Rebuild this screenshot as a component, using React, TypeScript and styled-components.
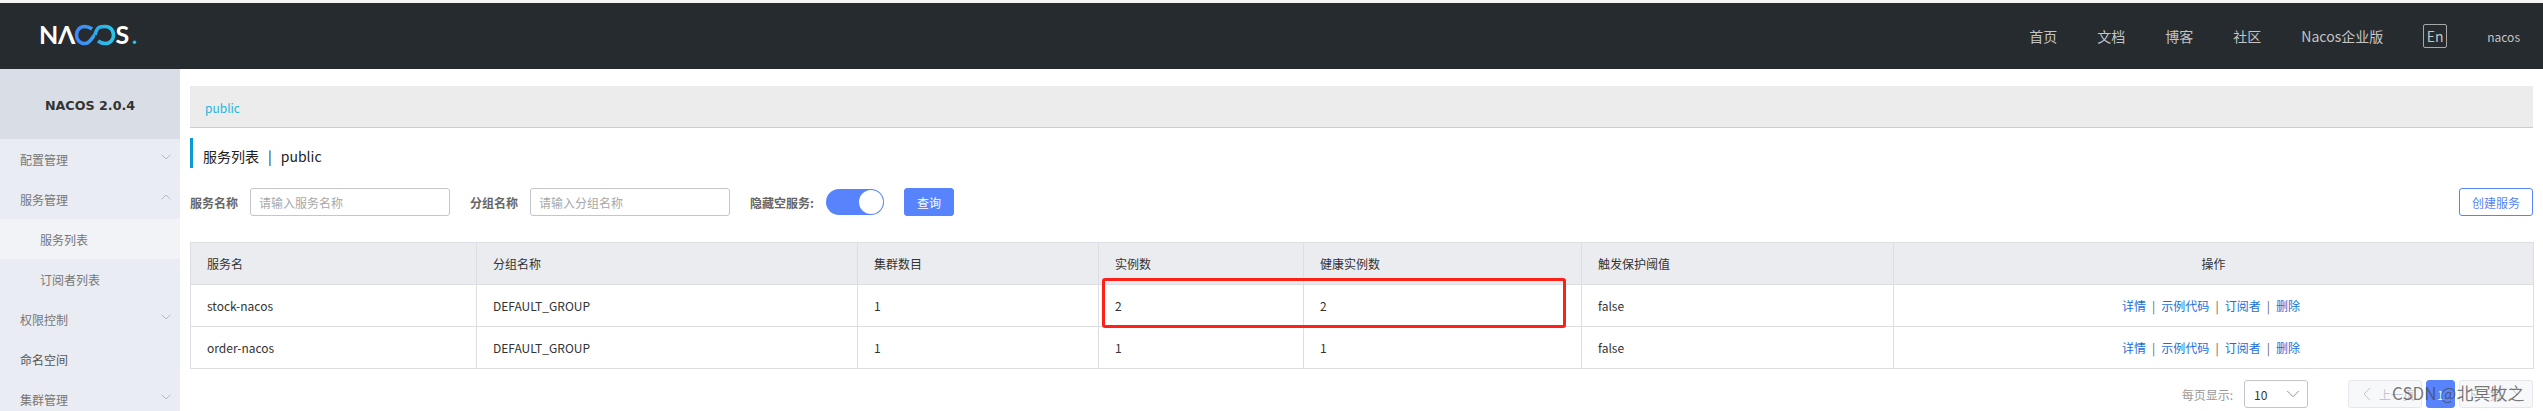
import React from 'react'
import styled, { createGlobalStyle } from 'styled-components'
import { ChevronDown, ChevronUp, ChevronLeft, ChevronRight } from 'lucide-react'

const FONT = `"Noto Sans CJK SC", "Noto Sans", Roboto, sans-serif`

const GlobalStyle = createGlobalStyle`
  html, body {
    margin: 0;
    height: 411px;
    overflow: hidden;
    background: #fff;
    font-family: ${FONT};
  }
  * { box-sizing: border-box; }
`

const Page = styled.div`
  position: relative;
  width: 2543px;
  height: 411px;
  overflow: hidden;
  padding-top: 3px;
  background: #f4f4f4;
`

const Header = styled.header`
  display: flex;
  align-items: center;
  height: 66px;
  padding: 0 23px 0 40px;
  background: #262b30;
  color: #c4c4c4;
  font-size: 14px;
`

const Logo = styled.svg`
  display: block;
  width: 98px;
  height: 30px;
`

const Nav = styled.nav`
  display: flex;
  align-items: center;
  gap: 40px;
  margin-left: auto;
`

const LangBox = styled.span`
  display: flex;
  align-items: center;
  justify-content: center;
  width: 24px;
  height: 24px;
  border: 1px solid #a8a8a8;
  border-radius: 2px;
`

const UserName = styled.span`
  font-size: 12px;
`

const Body = styled.div`
  display: flex;
  height: 342px;
  background: #fff;
`

const Sidebar = styled.aside`
  flex: 0 0 180px;
  background: #e9ecf2;
`

const VersionBox = styled.div`
  display: flex;
  align-items: center;
  justify-content: center;
  height: 70px;
  padding-top: 2px;
  background: #d9dde5;
  color: #333;
  font-family: "DejaVu Sans", sans-serif;
  font-size: 12.7px;
  font-weight: 700;
`

const MenuItem = styled.div<{ $sub?: boolean; $active?: boolean; $plain?: boolean }>`
  display: flex;
  align-items: center;
  justify-content: space-between;
  height: 40px;
  padding: 0 6px 0 ${p => (p.$sub ? '40px' : '20px')};
  background: ${p => (p.$active ? '#f1f3f7' : 'transparent')};
  color: ${p => (p.$plain ? '#555' : '#777')};
  font-size: 12px;

  svg {
    margin-top: -5px;
    color: #9a9da5;
  }
`

const Main = styled.main`
  flex: 1;
  min-width: 0;
  padding: 17px 10px 0;
`

const Breadcrumb = styled.div`
  display: flex;
  align-items: center;
  height: 42px;
  padding: 2px 0 0 15px;
  background: #ececec;
  border-bottom: 1px solid #cccccc;
  color: #27b6dc;
  font-size: 12px;
`

const Title = styled.h1`
  display: flex;
  align-items: center;
  gap: 9px;
  height: 30px;
  margin: 10px 0 0;
  padding: 6px 0 0 10px;
  border-left: 3px solid #0a9bd6;
  color: #222;
  font-size: 14px;
  font-weight: 400;
`

const FilterRow = styled.div`
  display: flex;
  align-items: center;
  height: 28px;
  margin-top: 20px;
`

const FilterLabel = styled.label`
  margin-right: 12px;
  color: #666;
  font-size: 12px;
  font-weight: 700;
`

const TextInput = styled.input`
  width: 200px;
  height: 28px;
  margin-right: 20px;
  padding: 0 8px;
  border: 1px solid #c4c6cf;
  border-radius: 3px;
  outline: none;
  font-family: ${FONT};
  font-size: 12px;

  &::placeholder {
    color: #a8a8a8;
  }
`

const Switch = styled.span`
  display: flex;
  justify-content: flex-end;
  width: 58px;
  height: 26px;
  margin-right: 20px;
  padding: 1px;
  border-radius: 13px;
  background: #5784fd;
`

const SwitchKnob = styled.span`
  width: 24px;
  height: 24px;
  border-radius: 50%;
  background: #fff;
`

const Button = styled.button<{ $outline?: boolean }>`
  height: 28px;
  padding: 0;
  width: ${p => (p.$outline ? '74px' : '50px')};
  margin-left: ${p => (p.$outline ? 'auto' : '0')};
  border: 1px solid #5784fd;
  border-radius: 3px;
  background: ${p => (p.$outline ? '#fff' : '#5784fd')};
  color: ${p => (p.$outline ? '#5784fd' : '#fff')};
  font-family: ${FONT};
  font-size: 12px;
`

const Table = styled.table`
  width: 2343px;
  margin-top: 26px;
  border-collapse: collapse;
  table-layout: fixed;
  color: #333;
  font-size: 12px;
`

const Col = styled.col<{ $w: number }>`
  width: ${p => p.$w}px;
`

const Th = styled.th<{ $center?: boolean }>`
  height: 42px;
  padding: 0 16px;
  border: 1px solid #dcdee3;
  background: #ebecf0;
  font-weight: 400;
  text-align: ${p => (p.$center ? 'center' : 'left')};
`

const Td = styled.td<{ $center?: boolean }>`
  height: 42px;
  padding: 0 ${p => (p.$center ? '21px' : '16px')} 0 16px;
  border: 1px solid #dcdee3;
  text-align: ${p => (p.$center ? 'center' : 'left')};
`

const ActionLink = styled.a`
  color: #1a6fd6;
`

const ActionSep = styled.span`
  margin: 0 6px;
  color: #666;
`

const Pager = styled.div`
  display: flex;
  align-items: center;
  justify-content: flex-end;
  height: 28px;
  margin-top: 11px;
`

const PagerLabel = styled.span`
  margin-right: 11px;
  color: #999;
  font-size: 12px;
`

const SizeSelect = styled.div`
  display: flex;
  align-items: center;
  justify-content: space-between;
  width: 64px;
  height: 28px;
  margin-right: 40px;
  padding: 0 3px 0 9px;
  border: 1px solid #c4c6cf;
  border-radius: 3px;
  color: #333;
  font-size: 12px;

  svg {
    color: #8a8a8a;
  }
`

const PageButton = styled.span<{ $active?: boolean }>`
  display: flex;
  align-items: center;
  justify-content: center;
  width: ${p => (p.$active ? '29px' : '74px')};
  height: 28px;
  margin-left: ${p => (p.$active ? '4px' : '0')};
  margin-right: ${p => (p.$active ? '4px' : '0')};
  border: 1px solid ${p => (p.$active ? '#5784fd' : '#e6e7eb')};
  border-radius: 3px;
  background: ${p => (p.$active ? '#5784fd' : '#f7f8fa')};
  color: ${p => (p.$active ? '#fff' : '#c4c6cf')};
  font-size: 12px;
`

const Highlight = styled.div`
  position: absolute;
  left: 1102px;
  top: 278px;
  width: 464px;
  height: 50px;
  border: 3px solid #ff2018;
  border-radius: 3px;
  pointer-events: none;
`

const Watermark = styled.div`
  position: absolute;
  left: 2392px;
  top: 380px;
  color: rgba(70, 70, 70, 0.72);
  font-family: ${FONT};
  font-size: 17px;
  line-height: 26px;
  white-space: nowrap;
  pointer-events: none;
`

const NavLinks = ['首页', '文档', '博客', '社区', 'Nacos企业版']

const menu = [
  { label: '配置管理', icon: 'down' },
  { label: '服务管理', icon: 'up' },
  { label: '服务列表', sub: true, active: true },
  { label: '订阅者列表', sub: true },
  { label: '权限控制', icon: 'down' },
  { label: '命名空间', plain: true },
  { label: '集群管理', icon: 'down' },
]

const columns = [
  { title: '服务名', w: 286 },
  { title: '分组名称', w: 381 },
  { title: '集群数目', w: 241 },
  { title: '实例数', w: 205 },
  { title: '健康实例数', w: 278 },
  { title: '触发保护阈值', w: 312 },
  { title: '操作', w: 640, center: true },
]

const rows = [
  ['stock-nacos', 'DEFAULT_GROUP', '1', '2', '2', 'false'],
  ['order-nacos', 'DEFAULT_GROUP', '1', '1', '1', 'false'],
]

const actions = ['详情', '示例代码', '订阅者', '删除']

function NacosLogo() {
  return (
    <Logo viewBox="0 0 98 30" role="img" aria-label="NACOS">
      <defs>
        <linearGradient id="loopLeft" x1="0" x2="1" y1="0" y2="0">
          <stop offset="0" stopColor="#3f86f6" />
          <stop offset="1" stopColor="#38a4f0" />
        </linearGradient>
        <linearGradient id="loopRight" x1="0" x2="1" y1="0" y2="0">
          <stop offset="0" stopColor="#2fa8ee" />
          <stop offset="1" stopColor="#29c6e8" />
        </linearGradient>
      </defs>
      <text x="-1" y="23" fill="#fff" fontFamily="Lato, sans-serif" fontWeight="700" fontSize="25">N</text>
      <text x="18" y="23" fill="#fff" fontFamily="Lato, sans-serif" fontWeight="700" fontSize="25">Λ</text>
      <path
        d="M52 8C50 6.500 47.500 5.500 44.500 5.500C39.800 5.500 36.500 9.300 36.500 14S39.800 22.500 44.500 22.500C51 22.500 53 14 55 14"
        fill="none"
        stroke="url(#loopLeft)"
        strokeWidth="3.600"
      />
      <path
        d="M55 14C57 5.500 60 5.500 65.500 5.500C70.200 5.500 73.500 9.300 73.500 14S70.200 22.500 65.500 22.500C62.500 22.500 60 21.500 58 20"
        fill="none"
        stroke="url(#loopRight)"
        strokeWidth="3.600"
      />
      <text x="75.500" y="23" fill="#fff" fontFamily="Lato, sans-serif" fontWeight="700" fontSize="25">S</text>
      <circle cx="94.500" cy="21.300" r="1.700" fill="#29c6e8" />
    </Logo>
  )
}

export default function App() {
  return (
    <>
      <GlobalStyle />
      <Page>
        <Header>
          <NacosLogo />
          <Nav>
            {NavLinks.map(link => <span key={link}>{link}</span>)}
            <LangBox>En</LangBox>
            <UserName>nacos</UserName>
          </Nav>
        </Header>
        <Body>
          <Sidebar>
            <VersionBox>NACOS 2.0.4</VersionBox>
            {menu.map(item => (
              <MenuItem key={item.label} $sub={item.sub} $active={item.active} $plain={item.plain}>
                {item.label}
                {item.icon === 'down' && <ChevronDown size={16} strokeWidth={1} />}
                {item.icon === 'up' && <ChevronUp size={16} strokeWidth={1} />}
              </MenuItem>
            ))}
          </Sidebar>
          <Main>
            <Breadcrumb>public</Breadcrumb>
            <Title>
              <span>服务列表</span>
              <span>|</span>
              <span>public</span>
            </Title>
            <FilterRow>
              <FilterLabel>服务名称</FilterLabel>
              <TextInput placeholder="请输入服务名称" readOnly />
              <FilterLabel>分组名称</FilterLabel>
              <TextInput placeholder="请输入分组名称" readOnly />
              <FilterLabel>隐藏空服务:</FilterLabel>
              <Switch><SwitchKnob /></Switch>
              <Button>查询</Button>
              <Button $outline>创建服务</Button>
            </FilterRow>
            <Table>
              <colgroup>
                {columns.map(c => <Col key={c.title} $w={c.w} />)}
              </colgroup>
              <thead>
                <tr>
                  {columns.map(c => <Th key={c.title} $center={c.center}>{c.title}</Th>)}
                </tr>
              </thead>
              <tbody>
                {rows.map(row => (
                  <tr key={row[0]}>
                    {row.map((cell, i) => <Td key={i}>{cell}</Td>)}
                    <Td $center>
                      {actions.map((a, i) => (
                        <React.Fragment key={a}>
                          {i > 0 && <ActionSep>|</ActionSep>}
                          <ActionLink>{a}</ActionLink>
                        </React.Fragment>
                      ))}
                    </Td>
                  </tr>
                ))}
              </tbody>
            </Table>
            <Pager>
              <PagerLabel>每页显示:</PagerLabel>
              <SizeSelect>
                10
                <ChevronDown size={22} strokeWidth={1} />
              </SizeSelect>
              <PageButton><ChevronLeft size={24} strokeWidth={1} />上一页</PageButton>
              <PageButton $active>1</PageButton>
              <PageButton>下一页<ChevronRight size={24} strokeWidth={1} /></PageButton>
            </Pager>
          </Main>
        </Body>
        <Highlight />
        <Watermark>CSDN @北冥牧之</Watermark>
      </Page>
    </>
  )
}
